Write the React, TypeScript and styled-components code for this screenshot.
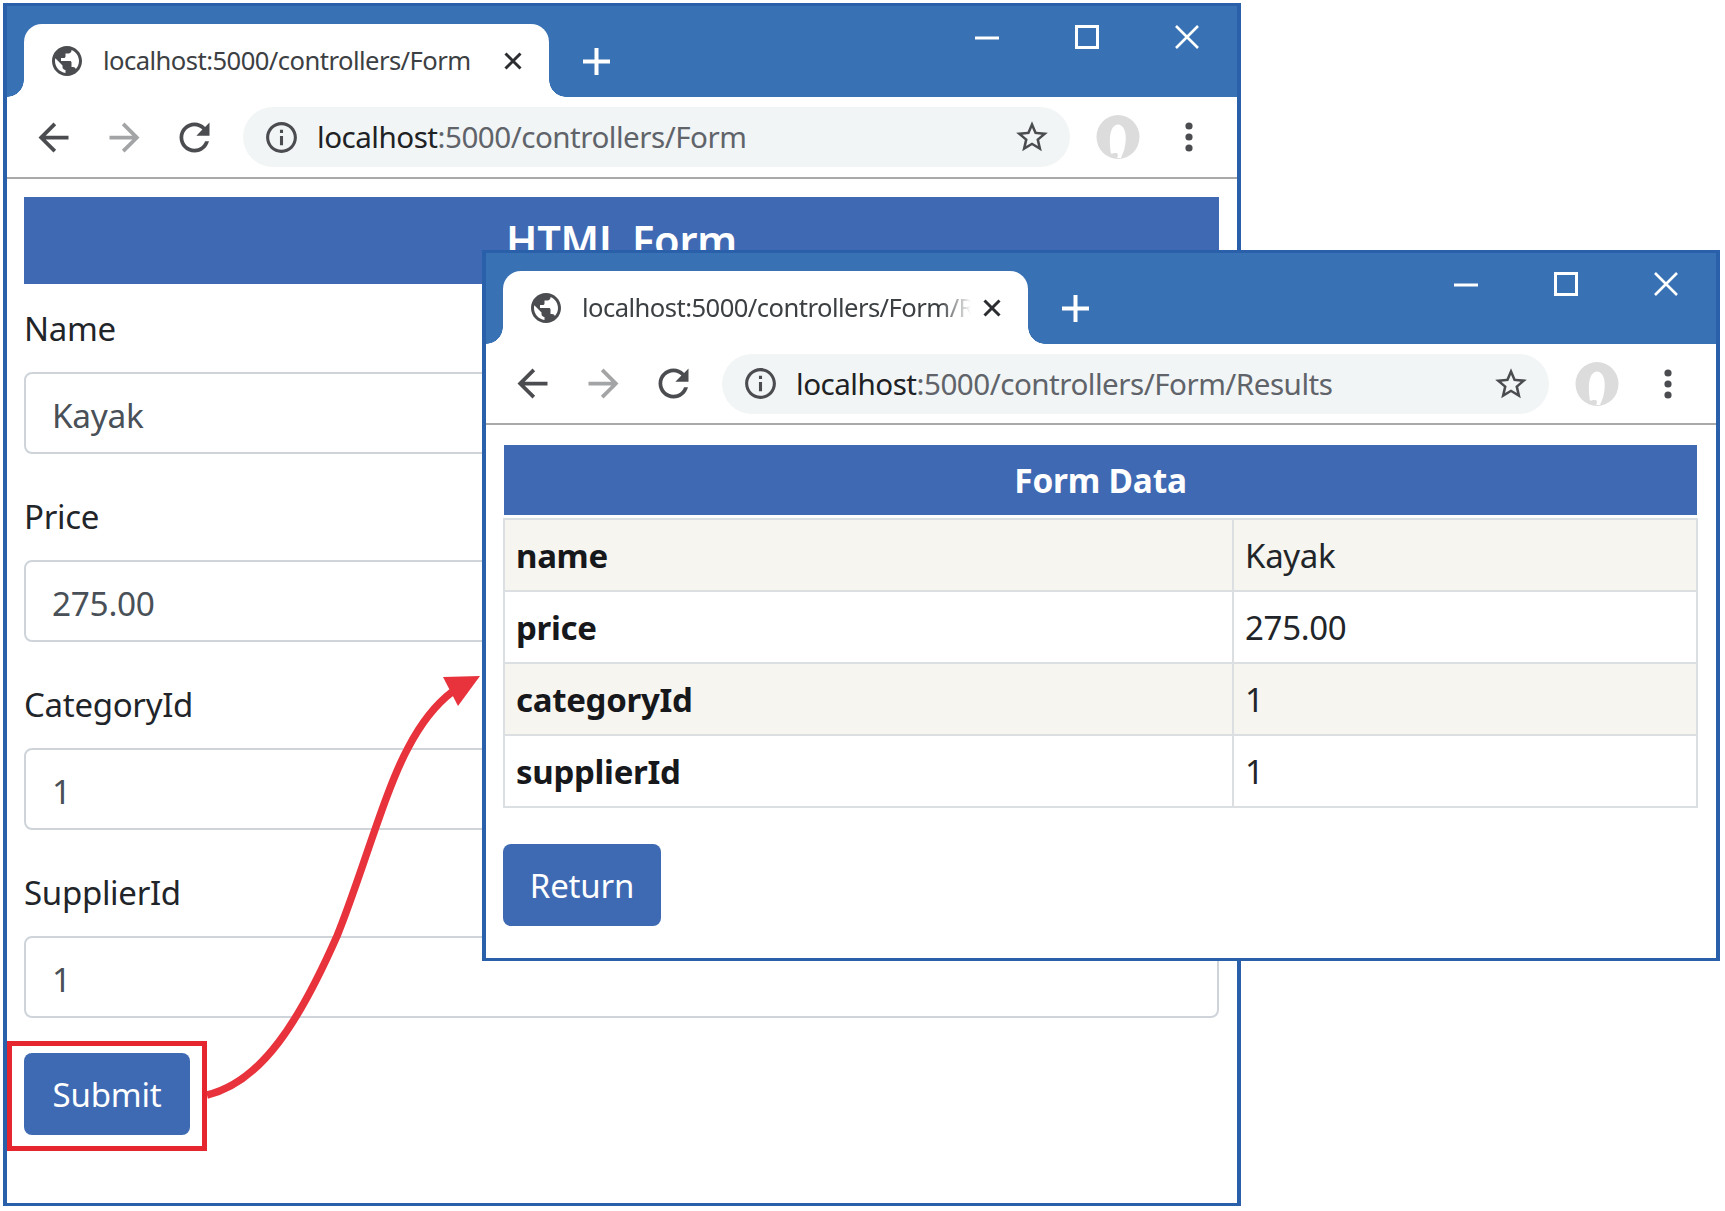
import styled, { createGlobalStyle } from "styled-components";

const GlobalStyle = createGlobalStyle`
  html, body {
    margin: 0;
    padding: 0;
    background: #fff;
  }
  body {
    font-family: "Noto Sans", "Open Sans", sans-serif;
    color: #212529;
  }
  * {
    box-sizing: border-box;
  }
`;

const Desktop = styled.div`
  position: relative;
  width: 1725px;
  height: 1211px;
  overflow: hidden;
  background: #fff;
`;

// browser window chrome
const Window = styled.div<{ $left: number; $top: number; $width: number; $height: number }>`
  position: absolute;
  left: ${(p) => p.$left}px;
  top: ${(p) => p.$top}px;
  width: ${(p) => p.$width}px;
  height: ${(p) => p.$height}px;
  display: flex;
  flex-direction: column;
  background: #fff;
  border: 3px solid #2a5fa9;
  border-width: 3px 4px 3px 4px;
`;

const TitleBar = styled.div`
  height: 91px;
  flex-shrink: 0;
  background: #3872b5;
  display: flex;
  align-items: flex-end;
  padding-left: 17px;
  position: relative;
`;

const Tab = styled.div`
  position: relative;
  width: 525px;
  height: 73px;
  background: #fff;
  border-radius: 18px 18px 0 0;
  display: flex;
  align-items: center;
  padding: 0 27px 0 28px;

  &::before,
  &::after {
    content: "";
    position: absolute;
    bottom: 0;
    width: 17px;
    height: 17px;
  }
  &::before {
    left: -17px;
    background: radial-gradient(circle at 0 0, #3872b5 16.5px, #fff 17px);
  }
  &::after {
    right: -17px;
    background: radial-gradient(circle at 100% 0, #3872b5 16.5px, #fff 17px);
  }
`;

const TabTitle = styled.div<{ $fade?: boolean }>`
  flex: 1;
  min-width: 0;
  margin: 0 ${(p) => (p.$fade ? 12 : 21)}px 0 21px;
  font-size: 25.6px;
  line-height: 36px;
  color: #3c4043;
  white-space: nowrap;
  overflow: hidden;
  letter-spacing: -0.55px;
  ${(p) =>
    p.$fade &&
    `mask-image: linear-gradient(to right, #000 92%, transparent 100%);`}
`;

const NewTab = styled.div`
  margin: 0 0 22px 34px;
  align-self: flex-end;
  display: flex;
`;

const WindowControls = styled.div`
  position: absolute;
  top: 19px;
  right: 38px;
  display: flex;
  gap: 76px;
  align-items: center;
`;

const Toolbar = styled.div<{ $height: number }>`
  height: ${(p) => p.$height}px;
  flex-shrink: 0;
  display: flex;
  align-items: center;
  padding: 0 43px 0 24px;
  border-bottom: 2px solid #a9a9a9;
  background: #fff;
`;

const NavIcon = styled.svg<{ $gap?: number; $muted?: boolean }>`
  width: 45px;
  height: 45px;
  flex-shrink: 0;
  margin-left: ${(p) => p.$gap ?? 0}px;
  fill: ${(p) => (p.$muted ? "#a2a4a6" : "#4a4c4f")};
`;

const UrlPill = styled.div`
  flex: 1;
  height: 60px;
  margin: 0 26px;
  border-radius: 30px;
  background: #f2f5f5;
  display: flex;
  align-items: center;
  padding: 0 19px 0 20px;
`;

const UrlText = styled.div`
  flex: 1;
  margin-left: 17px;
  font-size: 29.6px;
  line-height: 40px;
  white-space: nowrap;
  color: #60646a;
  letter-spacing: -0.5px;

  b {
    font-weight: 400;
    color: #202124;
  }
`;

const Content = styled.div<{ $top: number }>`
  flex: 1;
  padding: ${(p) => p.$top}px 18px 0 17px;
`;

const Band = styled.div`
  height: 87px;
  background: #3f6ab3;
  color: #fff;
  font-size: 41.5px;
  font-weight: 600;
  line-height: 87px;
  text-align: center;
  letter-spacing: -0.2px;
`;

const Group = styled.div`
  margin-top: 20px;
  margin-bottom: 38px;
`;

const Label = styled.label`
  display: block;
  padding-top: 1px;
  font-size: 33px;
  line-height: 48px;
  margin-bottom: 19px;
  color: #212529;
  letter-spacing: -0.3px;
`;

const Input = styled.input`
  display: block;
  width: 100%;
  height: 82px;
  padding: 3px 26px 0;
  border: 2px solid #ced4da;
  border-radius: 8px;
  background: #fff;
  font-family: inherit;
  font-size: 33.4px;
  color: #495057;
  letter-spacing: -0.3px;
`;

const Button = styled.button<{ $width: number }>`
  display: block;
  width: ${(p) => p.$width}px;
  height: 82px;
  padding: 1px 0 0;
  border: none;
  border-radius: 8px;
  background: #3e6ab3;
  color: #fff;
  font-family: inherit;
  font-size: 33px;
  letter-spacing: -0.2px;
`;

const SubmitButton = styled(Button)`
  margin-top: -3px;
`;

const ReturnButton = styled(Button)`
  margin-top: 36px;
`;

const DataTable = styled.table`
  width: 1195px;
  table-layout: fixed;
  border-collapse: collapse;
`;

const HeadCell = styled.th`
  height: 70px;
  padding: 0;
  background: #3f6ab3;
  color: #fff;
  font-size: 33.4px;
  font-weight: 700;
  text-align: center;
  letter-spacing: -0.2px;
`;

const Row = styled.tr<{ $striped?: boolean }>`
  background: ${(p) => (p.$striped ? "#f6f5f0" : "#fff")};
`;

const KeyCell = styled.td`
  height: 72px;
  padding: 0 11px;
  border: 2px solid #dcdfe2;
  font-size: 33px;
  font-weight: 700;
  color: #16181b;
  letter-spacing: -0.3px;
`;

const ValueCell = styled.td`
  height: 72px;
  padding: 0 11px;
  border: 2px solid #dcdfe2;
  font-size: 33px;
  color: #212529;
  letter-spacing: -0.3px;
`;

const FirstRowGap = styled.tr`
  height: 4px;
  background: #e9eaec;
`;

// annotations on top of the two windows
const Highlight = styled.div`
  position: absolute;
  left: 7px;
  top: 1041px;
  width: 200px;
  height: 110px;
  border: 5px solid #e5262f;
`;

const ArrowLayer = styled.svg`
  position: absolute;
  left: 0;
  top: 0;
  width: 1725px;
  height: 1211px;
  pointer-events: none;
`;

function Globe() {
  return (
    <svg viewBox="2 2 20 20" style={{ flexShrink: 0, width: 30, height: 30 }} fill="#4a4c4f">
      <path d="M12 2C6.48 2 2 6.48 2 12s4.48 10 10 10 10-4.48 10-10S17.52 2 12 2zm-1 17.93c-3.95-.49-7-3.85-7-7.93 0-.62.08-1.21.21-1.79L9 15v1c0 1.1.9 2 2 2v1.93zm6.9-2.54c-.26-.81-1-1.39-1.9-1.39h-1v-3c0-.55-.45-1-1-1H8v-2h2c.55 0 1-.45 1-1V7h2c1.1 0 2-.9 2-2v-.41c2.93 1.19 5 4.06 5 7.41 0 2.08-.8 3.97-2.1 5.39z" />
    </svg>
  );
}

function TabClose() {
  return (
    <svg width="18" height="18" viewBox="0 0 18 18" fill="none" stroke="#2b2d30" strokeWidth="3" style={{ flexShrink: 0 }}>
      <path d="M1.5 1.5l15 15M16.5 1.5l-15 15" />
    </svg>
  );
}

function Plus() {
  return (
    <svg width="27" height="27" viewBox="0 0 27 27" fill="none" stroke="#fff" strokeWidth="4">
      <path d="M13.5 0v27M0 13.5h27" />
    </svg>
  );
}

function Controls() {
  return (
    <WindowControls>
      <svg width="24" height="24" viewBox="0 0 24 24" fill="none" stroke="#fff" strokeWidth="3">
        <path d="M0 13h24" />
      </svg>
      <svg width="24" height="24" viewBox="0 0 24 24" fill="none" stroke="#fff" strokeWidth="3">
        <rect x="1.5" y="1.5" width="21" height="21" />
      </svg>
      <svg width="24" height="24" viewBox="0 0 24 24" fill="none" stroke="#fff" strokeWidth="2.6">
        <path d="M1 1l22 22M23 1L1 23" />
      </svg>
    </WindowControls>
  );
}

function Avatar() {
  return (
    <svg width="44" height="44" viewBox="0 0 44 42" preserveAspectRatio="none" style={{ flexShrink: 0 }}>
      <ellipse cx="22" cy="21" rx="21.5" ry="21" fill="#dcdcdc" />
      <path d="M15 37C13 24 13 10 22 9c9 1 9 15 6 25l-3 7h-4c2-4 1-6-6-4z" fill="#fff" />
    </svg>
  );
}

function Dots() {
  return (
    <svg width="10" height="30" viewBox="0 0 10 30" fill="#4a4c4f" style={{ flexShrink: 0, marginLeft: 44 }}>
      <circle cx="5" cy="4" r="3.6" />
      <circle cx="5" cy="15" r="3.6" />
      <circle cx="5" cy="26" r="3.6" />
    </svg>
  );
}

function Chrome({ title, host, path, fade, toolbar }: { title: string; host: string; path: string; fade?: boolean; toolbar: number }) {
  return (
    <>
      <TitleBar>
        <Tab>
          <Globe />
          <TabTitle $fade={fade}>{title}</TabTitle>
          <TabClose />
        </Tab>
        <NewTab>
          <Plus />
        </NewTab>
        <Controls />
      </TitleBar>
      <Toolbar $height={toolbar}>
        <NavIcon viewBox="0 0 24 24">
          <path d="M20 11H7.83l5.59-5.59L12 4l-8 8 8 8 1.41-1.41L7.83 13H20v-2z" />
        </NavIcon>
        <NavIcon viewBox="0 0 24 24" $gap={26} $muted>
          <path d="M4 11h12.17l-5.59-5.59L12 4l8 8-8 8-1.41-1.41L16.17 13H4v-2z" />
        </NavIcon>
        <NavIcon viewBox="0 0 24 24" $gap={25}>
          <path d="M17.65 6.35C16.2 4.9 14.21 4 12 4c-4.42 0-7.99 3.58-7.99 8s3.57 8 7.99 8c3.73 0 6.84-2.55 7.73-6h-2.08c-.82 2.33-3.04 4-5.65 4-3.31 0-6-2.69-6-6s2.69-6 6-6c1.66 0 3.14.69 4.22 1.78L13 11h7V4l-2.35 2.35z" />
        </NavIcon>
        <UrlPill>
          <NavIcon viewBox="0 0 24 24" style={{ width: 37, height: 37 }}>
            <path d="M11 7h2v2h-2zm0 4h2v6h-2zm1-9C6.48 2 2 6.48 2 12s4.48 10 10 10 10-4.48 10-10S17.52 2 12 2zm0 18c-4.41 0-8-3.59-8-8s3.59-8 8-8 8 3.59 8 8-3.59 8-8 8z" />
          </NavIcon>
          <UrlText>
            <b>{host}</b>
            {path}
          </UrlText>
          <NavIcon viewBox="0 0 24 24" style={{ width: 38, height: 38 }}>
            <path d="M22 9.24l-7.19-.62L12 2 9.19 8.63 2 9.24l5.46 4.73L5.82 21 12 17.27 18.18 21l-1.63-7.03L22 9.24zM12 15.4l-3.76 2.27 1-4.28-3.32-2.88 4.38-.38L12 6.1l1.71 4.04 4.38.38-3.32 2.88 1 4.28L12 15.4z" />
          </NavIcon>
        </UrlPill>
        <Avatar />
        <Dots />
      </Toolbar>
    </>
  );
}

const fields = [
  { label: "Name", value: "Kayak" },
  { label: "Price", value: "275.00" },
  { label: "CategoryId", value: "1" },
  { label: "SupplierId", value: "1" },
];

const results = [
  { key: "name", value: "Kayak", striped: true },
  { key: "price", value: "275.00", striped: false },
  { key: "categoryId", value: "1", striped: true },
  { key: "supplierId", value: "1", striped: false },
];

export default function App() {
  return (
    <Desktop>
      <GlobalStyle />
      <Window $left={3} $top={3} $width={1238} $height={1203}>
        <Chrome title="localhost:5000/controllers/Form" host="localhost" path=":5000/controllers/Form" toolbar={82} />
        <Content $top={18}>
          <Band>HTML Form</Band>
          {fields.map((f) => (
            <Group key={f.label}>
              <Label>{f.label}</Label>
              <Input readOnly value={f.value} />
            </Group>
          ))}
          <SubmitButton $width={166}>Submit</SubmitButton>
        </Content>
      </Window>

      <Window $left={482} $top={250} $width={1238} $height={711}>
        <Chrome title="localhost:5000/controllers/Form/Results" host="localhost" path=":5000/controllers/Form/Results" fade toolbar={81} />
        <Content $top={20}>
          <DataTable>
            <colgroup>
              <col style={{ width: 729 }} />
              <col />
            </colgroup>
            <thead>
              <tr>
                <HeadCell colSpan={2}>Form Data</HeadCell>
              </tr>
            </thead>
            <tbody>
              <FirstRowGap />
              {results.map((r) => (
                <Row key={r.key} $striped={r.striped}>
                  <KeyCell>{r.key}</KeyCell>
                  <ValueCell>{r.value}</ValueCell>
                </Row>
              ))}
            </tbody>
          </DataTable>
          <ReturnButton $width={158}>Return</ReturnButton>
        </Content>
      </Window>

      <Highlight />
      <ArrowLayer viewBox="0 0 1725 1211">
        <path
          d="M207 1095C262 1082 300 1020 337 936C360 880 385 790 408 748C420 725 435 705 452 692"
          fill="none"
          stroke="#e8333c"
          strokeWidth="7.5"
        />
        <polygon points="443,677 480,676 458,706" fill="#e8333c" />
      </ArrowLayer>
    </Desktop>
  );
}
